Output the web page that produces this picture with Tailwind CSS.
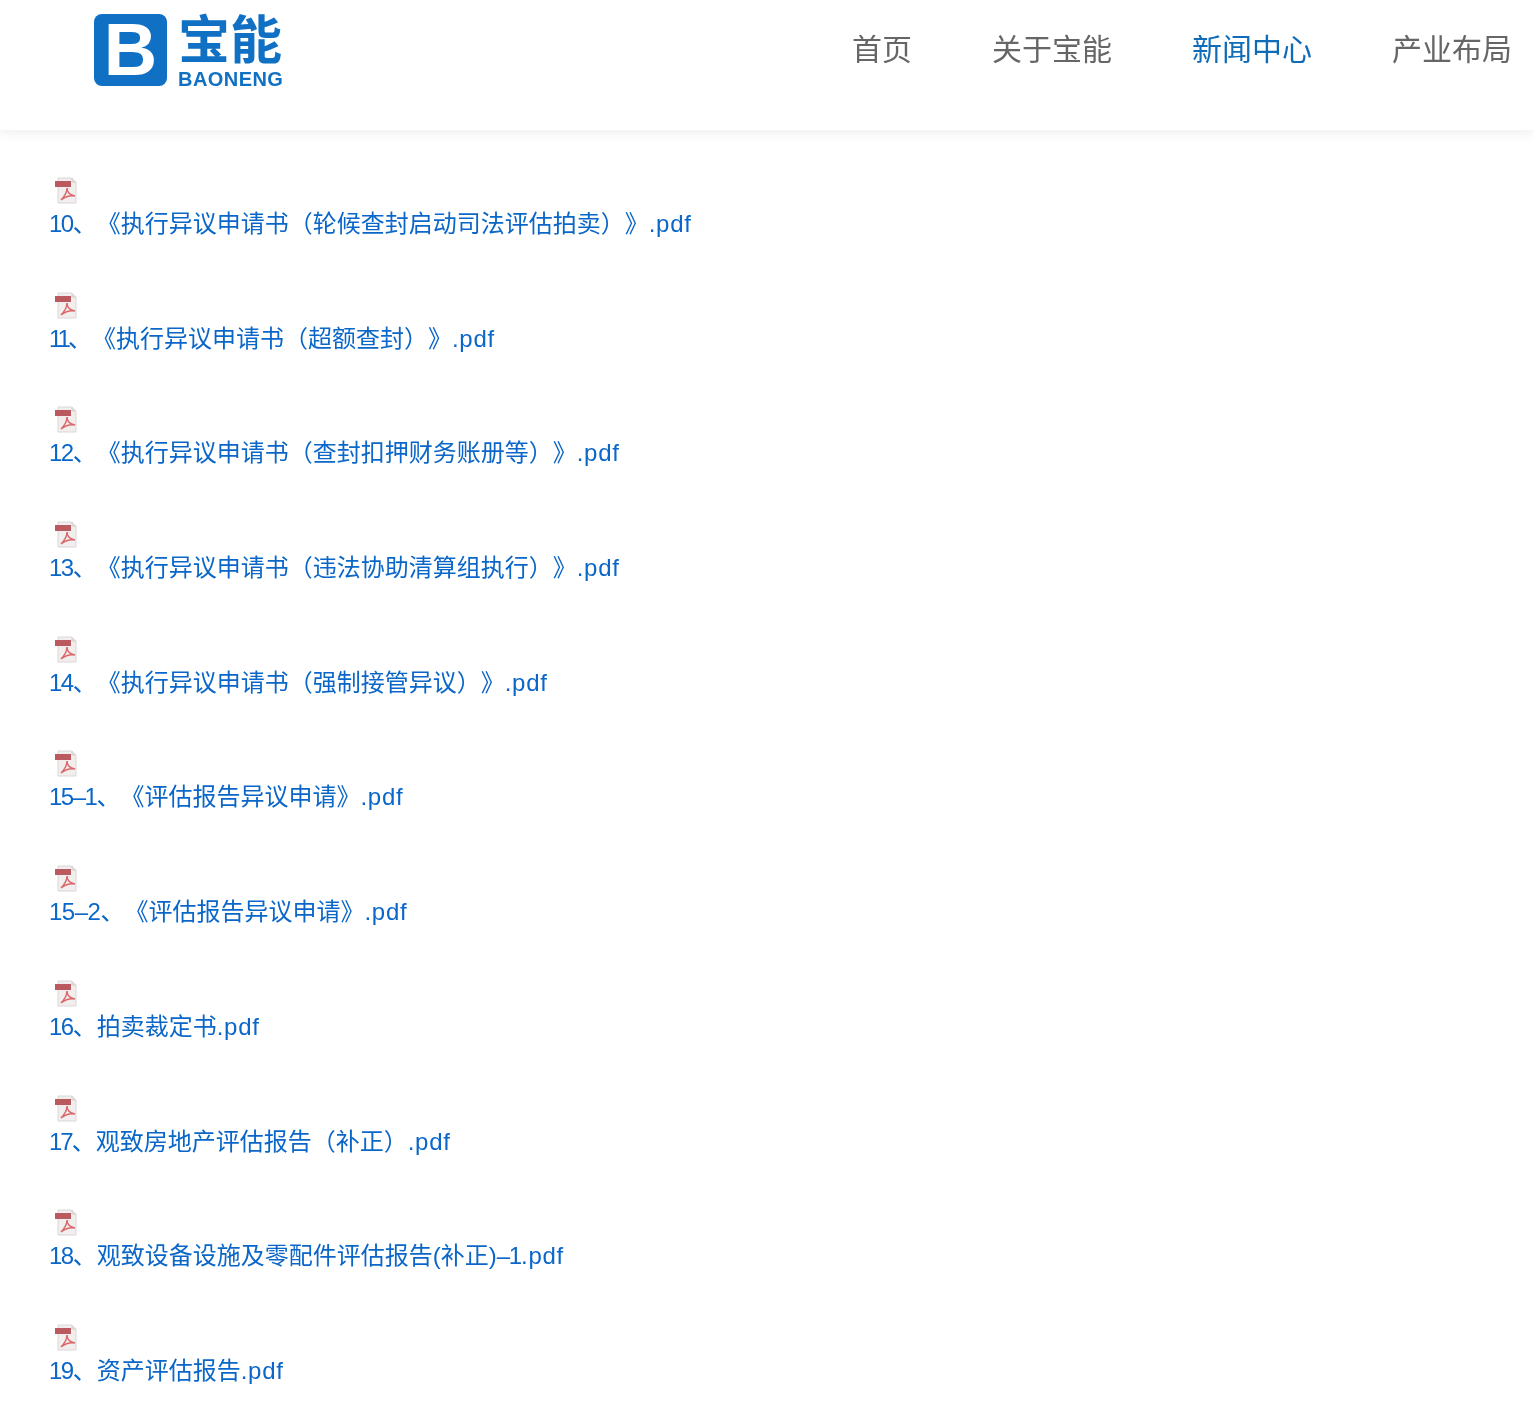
<!DOCTYPE html>
<html lang="zh-CN">
<head>
    <meta charset="UTF-8">
    <title>宝能</title>
    <script src="https://cdn.jsdelivr.net/npm/@tailwindcss/browser@4"></script>
</head>
<body class="bg-white min-h-screen overflow-hidden font-['Liberation_Sans','Noto_Sans_CJK_SC',sans-serif] [text-spacing-trim:space-all]">
    <svg class="hidden">
        <symbol id="pdf" viewBox="0 0 26 28">
            <path d="M5 2H19L23 6V27H5Z" fill="#f1eeed" stroke="#dcd7d5"/>
            <path d="M19 2V6H23" fill="#e4dfdd" stroke="#d5cfcd"/>
            <rect x="2" y="5" width="16" height="6" fill="#bb5a5e"/>
            <path d="M8 24C11 21 14 16 14 12C14 16 17 19 22 20C17 19 12 21 8 24Z" fill="none" stroke="#d9686b" stroke-width="1.5"/>
        </symbol>
    </svg>
    <header class="h-[130px] bg-white shadow-[0_2px_12px_rgba(0,0,0,0.08)] flex justify-between relative">
        <a href="#" class="flex ml-[94px] mt-[14px] h-[74px] gap-[11px] blur-[0.6px]">
            <div class="w-[73px] h-[72px] bg-[#0f70c4] rounded-[8px] flex items-center justify-center">
                <span class="text-white text-[74px] font-bold leading-[72px]">B</span>
            </div>
            <div class="flex flex-col items-start text-[#0f70c4] font-bold">
                <span class="text-[52px] leading-[52px] mt-[1px] whitespace-nowrap">宝能</span>
                <span class="text-[20px] leading-[22px] mt-[1px] tracking-[0.45px]">BAONENG</span>
            </div>
        </a>
        <nav class="flex gap-[80px] pr-[22px] pt-[32px] text-[30px] leading-[36px] text-[#666666] h-fit blur-[0.4px]">
            <a href="#">首页</a>
            <a href="#">关于宝能</a>
            <a href="#" class="text-[#0f6cb8]">新闻中心</a>
            <a href="#">产业布局</a>
        </nav>
    </header>
    <ul class="pl-[49px] pt-[46px] flex flex-col gap-[49.7px] text-[24px] leading-[34px] text-[#0a66c8] blur-[0.4px]">
        <li><svg class="w-[26px] h-[28px] ml-[4px] mb-[3px]"><use href="#pdf"/></svg><a href="#" class="block"><span class="tracking-[-1.5px]">10</span>、《执行异议申请书（轮候查封启动司法评估拍卖）》<span class="tracking-[0.75px]">.pdf</span></a></li>
        <li><svg class="w-[26px] h-[28px] ml-[4px] mb-[3px]"><use href="#pdf"/></svg><a href="#" class="block"><span class="tracking-[-3px]">11</span>、《执行异议申请书（超额查封）》<span class="tracking-[0.75px]">.pdf</span></a></li>
        <li><svg class="w-[26px] h-[28px] ml-[4px] mb-[3px]"><use href="#pdf"/></svg><a href="#" class="block"><span class="tracking-[-1.5px]">12</span>、《执行异议申请书（查封扣押财务账册等）》<span class="tracking-[0.75px]">.pdf</span></a></li>
        <li><svg class="w-[26px] h-[28px] ml-[4px] mb-[3px]"><use href="#pdf"/></svg><a href="#" class="block"><span class="tracking-[-1.5px]">13</span>、《执行异议申请书（违法协助清算组执行）》<span class="tracking-[0.75px]">.pdf</span></a></li>
        <li><svg class="w-[26px] h-[28px] ml-[4px] mb-[3px]"><use href="#pdf"/></svg><a href="#" class="block"><span class="tracking-[-1.5px]">14</span>、《执行异议申请书（强制接管异议）》<span class="tracking-[0.75px]">.pdf</span></a></li>
        <li><svg class="w-[26px] h-[28px] ml-[4px] mb-[3px]"><use href="#pdf"/></svg><a href="#" class="block"><span class="tracking-[-1.5px]">15–1</span>、《评估报告异议申请》<span class="tracking-[0.75px]">.pdf</span></a></li>
        <li><svg class="w-[26px] h-[28px] ml-[4px] mb-[3px]"><use href="#pdf"/></svg><a href="#" class="block"><span class="tracking-[-0.5px]">15–2</span>、《评估报告异议申请》<span class="tracking-[0.75px]">.pdf</span></a></li>
        <li><svg class="w-[26px] h-[28px] ml-[4px] mb-[3px]"><use href="#pdf"/></svg><a href="#" class="block"><span class="tracking-[-1.5px]">16</span>、拍卖裁定书<span class="tracking-[0.75px]">.pdf</span></a></li>
        <li><svg class="w-[26px] h-[28px] ml-[4px] mb-[3px]"><use href="#pdf"/></svg><a href="#" class="block"><span class="tracking-[-2px]">17</span>、观致房地产评估报告（补正）<span class="tracking-[0.75px]">.pdf</span></a></li>
        <li><svg class="w-[26px] h-[28px] ml-[4px] mb-[3px]"><use href="#pdf"/></svg><a href="#" class="block"><span class="tracking-[-1.5px]">18</span>、观致设备设施及零配件评估报告(补正)<span class="tracking-[-1.2px]">–1</span><span class="tracking-[0.75px]">.pdf</span></a></li>
        <li><svg class="w-[26px] h-[28px] ml-[4px] mb-[3px]"><use href="#pdf"/></svg><a href="#" class="block"><span class="tracking-[-1.5px]">19</span>、资产评估报告<span class="tracking-[0.75px]">.pdf</span></a></li>
    </ul>
</body>
</html>
